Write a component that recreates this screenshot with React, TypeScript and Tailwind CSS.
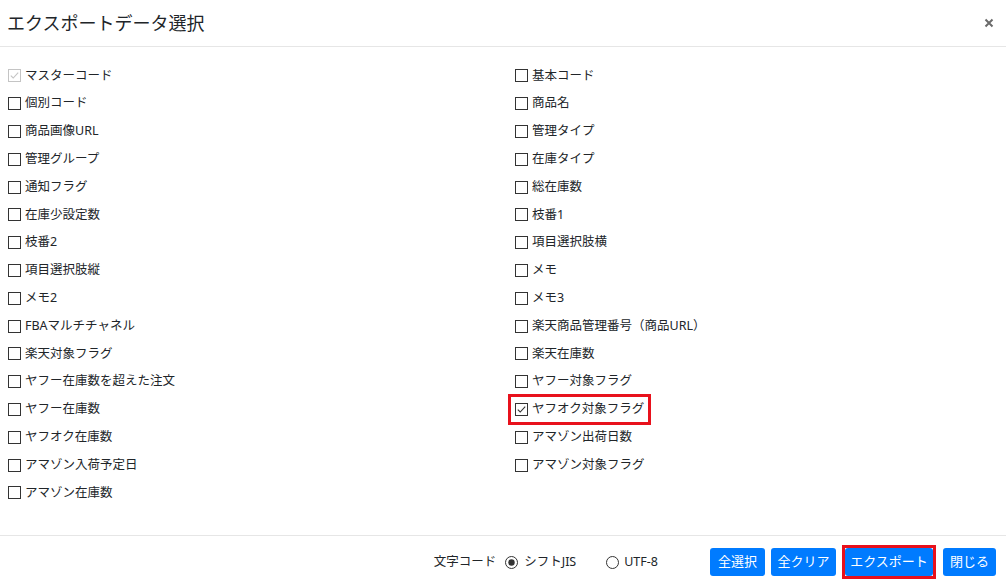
import React from "react";

type Item = { label: string; checked?: boolean; disabled?: boolean; marked?: boolean };

const left: Item[] = [
  { label: "マスターコード", checked: true, disabled: true },
  { label: "個別コード" },
  { label: "商品画像URL" },
  { label: "管理グループ" },
  { label: "通知フラグ" },
  { label: "在庫少設定数" },
  { label: "枝番2" },
  { label: "項目選択肢縦" },
  { label: "メモ2" },
  { label: "FBAマルチチャネル" },
  { label: "楽天対象フラグ" },
  { label: "ヤフー在庫数を超えた注文" },
  { label: "ヤフー在庫数" },
  { label: "ヤフオク在庫数" },
  { label: "アマゾン入荷予定日" },
  { label: "アマゾン在庫数" },
];

const right: Item[] = [
  { label: "基本コード" },
  { label: "商品名" },
  { label: "管理タイプ" },
  { label: "在庫タイプ" },
  { label: "総在庫数" },
  { label: "枝番1" },
  { label: "項目選択肢横" },
  { label: "メモ" },
  { label: "メモ3" },
  { label: "楽天商品管理番号（商品URL）" },
  { label: "楽天在庫数" },
  { label: "ヤフー対象フラグ" },
  { label: "ヤフオク対象フラグ", checked: true, marked: true },
  { label: "アマゾン出荷日数" },
  { label: "アマゾン対象フラグ" },
];

function Box({ checked, disabled }: { checked?: boolean; disabled?: boolean }) {
  const stroke = disabled ? "#c4c4c4" : "#333333";
  return (
    <svg width="13" height="13" viewBox="0 0 13 13" className="shrink-0">
      <rect x="0.5" y="0.5" width="12" height="12" fill="#fff" stroke={stroke} />
      {checked && (
        <path d="M2.8 6.6 L5.2 9 L10.2 3.6" fill="none" stroke={stroke} strokeWidth="1.1" />
      )}
    </svg>
  );
}

function Row({ item }: { item: Item }) {
  return (
    <div className="flex h-[27.8px] items-center">
      <label className="relative flex items-center gap-[4px]">
        <Box checked={item.checked} disabled={item.disabled} />
        <span className="text-[12.5px] leading-none">{item.label}</span>
        {item.marked && (
          <span className="pointer-events-none absolute -left-[7px] -right-[7px] -top-[9px] -bottom-[9px] border-[3px] border-[#e8111c]" />
        )}
      </label>
    </div>
  );
}

function Radio({ on }: { on?: boolean }) {
  return (
    <svg width="13" height="13" viewBox="0 0 13 13" className="shrink-0">
      <circle cx="6.5" cy="6.5" r="6" fill="#fff" stroke="#333" />
      {on && <circle cx="6.5" cy="6.5" r="3.2" fill="#333" />}
    </svg>
  );
}

function Btn({ children, w }: { children: React.ReactNode; w: string }) {
  return (
    <button className={`${w} h-[28px] rounded-[3px] bg-[#007bff] text-[13px] text-white`}>
      {children}
    </button>
  );
}

export default function App() {
  return (
    <div
      className="flex h-[588px] w-[1006px] flex-col bg-white text-[13px] text-[#212529]"
      style={{ fontFamily: '"Noto Sans", "Noto Sans CJK JP", sans-serif' }}
    >
      <div className="flex h-[47px] shrink-0 items-center justify-between border-b border-[#e6e6e6] pl-[7px] pr-[12px]">
        <h1 className="text-[18px] font-normal leading-none">エクスポートデータ選択</h1>
        <svg width="10" height="10" viewBox="0 0 10 10">
          <path d="M1.5 1.5 L8.5 8.5 M8.5 1.5 L1.5 8.5" stroke="#6b6b6b" strokeWidth="2" />
        </svg>
      </div>

      <div className="grid flex-1 grid-cols-2 pl-[8px] pt-[15px]">
        <div className="flex flex-col">
          {left.map((it) => (
            <Row key={it.label} item={it} />
          ))}
        </div>
        <div className="flex flex-col pl-[8px]">
          {right.map((it) => (
            <Row key={it.label} item={it} />
          ))}
        </div>
      </div>

      <div className="flex h-[53px] shrink-0 items-center justify-end border-t border-[#e6e6e6] pr-[10px]">
        <div className="mr-[52px] flex items-center text-[12.5px]">
          <span className="mr-[9px]">文字コード</span>
          <label className="flex items-center gap-[6px]">
            <Radio on />
            <span>シフトJIS</span>
          </label>
          <label className="ml-[30px] flex items-center gap-[5px]">
            <Radio />
            <span>UTF-8</span>
          </label>
        </div>
        <div className="flex items-center">
          <Btn w="w-[55px]">全選択</Btn>
          <span className="ml-[6px]">
            <Btn w="w-[65px]">全クリア</Btn>
          </span>
          <span className="relative ml-[9px]">
            <Btn w="w-[88px]">エクスポート</Btn>
            <span className="pointer-events-none absolute -inset-[3px] border-[3px] border-[#e8111c]" />
          </span>
          <span className="ml-[10px]">
            <Btn w="w-[53px]">閉じる</Btn>
          </span>
        </div>
      </div>
    </div>
  );
}
